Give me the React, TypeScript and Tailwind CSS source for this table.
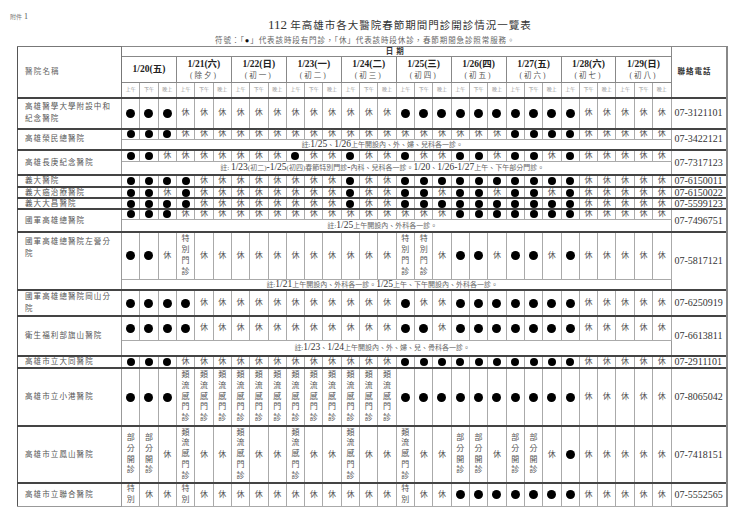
import type { ReactNode } from 'react';

type Row = {
  name: string;
  phone: string;
  cells: string;
  h: string;
  note?: string;
  noteH?: string;
  nameTop?: boolean;
  tight?: boolean;
};

const dates = [
  { d: '1/20(五)', sub: '' },
  { d: '1/21(六)', sub: '(除夕)' },
  { d: '1/22(日)', sub: '(初一)' },
  { d: '1/23(一)', sub: '(初二)' },
  { d: '1/24(二)', sub: '(初三)' },
  { d: '1/25(三)', sub: '(初四)' },
  { d: '1/26(四)', sub: '(初五)' },
  { d: '1/27(五)', sub: '(初六)' },
  { d: '1/28(六)', sub: '(初七)' },
  { d: '1/29(日)', sub: '(初八)' },
];

const rows: Row[] = [
  {
    name: '高雄醫學大學附設中和紀念醫院',
    phone: '07-3121101',
    cells: 'ooo' + 'x'.repeat(12) + 'ooooooooo' + 'oxx' + 'xxx',
    h: 'h-[31px]',
  },
  {
    name: '高雄榮民總醫院',
    phone: '07-3422121',
    cells: 'ooo' + 'x'.repeat(18) + 'oooo' + 'xxxxx',
    h: 'h-[11px]',
    note: '註:1/25、1/26上午開設內、外、婦、兒科各一診。',
    noteH: 'h-[10px]',
    tight: true,
  },
  {
    name: '高雄長庚紀念醫院',
    phone: '07-7317123',
    cells: 'oox' + 'xxx' + 'xxx' + 'oxx' + 'oxx' + 'oxx' + 'oox' + 'oox' + 'oxx' + 'xxx',
    h: 'h-[11px]',
    note: '註: 1/23(初二)-1/25(初四)春節特別門診-內科、兒科各一診。1/20、1/26-1/27上午、下午部分門診。',
    noteH: 'h-[14px]',
    tight: true,
  },
  {
    name: '義大醫院',
    phone: '07-6150011',
    cells: 'oooo' + 'x'.repeat(8) + 'oxx' + 'o'.repeat(10) + 'xxxxx',
    h: 'h-[12px]',
    tight: true,
  },
  {
    name: '義大癌治療醫院',
    phone: '07-6150022',
    cells: 'ooxo' + 'x'.repeat(8) + 'oxx' + 'oox' + 'oox' + 'oox' + 'o' + 'xxxxx',
    h: 'h-[11px]',
    tight: true,
  },
  {
    name: '義大大昌醫院',
    phone: '07-5599123',
    cells: 'oooo' + 'x'.repeat(8) + 'oxx' + 'o'.repeat(10) + 'xxxxx',
    h: 'h-[11px]',
    tight: true,
  },
  {
    name: '國軍高雄總醫院',
    phone: '07-7496751',
    cells: 'ooo' + 'x'.repeat(15) + 'o'.repeat(7) + 'xxxxx',
    h: 'h-[10px]',
    note: '註:1/25上午開設內、外科各一診。',
    noteH: 'h-[13px]',
    tight: true,
  },
  {
    name: '國軍高雄總醫院左營分院',
    phone: '07-5817121',
    cells: 'oox' + 't' + 'x'.repeat(11) + 'ttx' + 'oox' + 'oox' + 'o' + 'xxxxx',
    h: 'h-[47px]',
    note: '註:1/21上午開設內、外科各一診。1/25上午、下午開設內、外科各一診。',
    noteH: 'h-[11px]',
    nameTop: true,
  },
  {
    name: '國軍高雄總醫院岡山分院',
    phone: '07-6250919',
    cells: 'oooo' + 'x'.repeat(11) + 'oxx' + 'o'.repeat(7) + 'xxxxx',
    h: 'h-[25px]',
  },
  {
    name: '衛生福利部旗山醫院',
    phone: '07-6613811',
    cells: 'oooo' + 'x'.repeat(11) + 'oox' + 'o'.repeat(7) + 'xxxxx',
    h: 'h-[24px]',
    note: '註:1/23、1/24上午開設內、外、婦、兒、骨科各一診。',
    noteH: 'h-[16px]',
  },
  {
    name: '高雄市立大同醫院',
    phone: '07-2911101',
    cells: 'ooo' + 'x'.repeat(12) + 'o'.repeat(10) + 'xxxxx',
    h: 'h-[12px]',
    tight: true,
  },
  {
    name: '高雄市立小港醫院',
    phone: '07-8065042',
    cells: 'ooo' + 'f'.repeat(12) + 'o'.repeat(10) + 'xxxxx',
    h: 'h-[58px]',
  },
  {
    name: '高雄市立鳳山醫院',
    phone: '07-7418151',
    cells: 'ppx' + 'fxx'.repeat(5) + 'ppx' + 'ppx' + 'o' + 'xxxxx',
    h: 'h-[57px]',
  },
  {
    name: '高雄市立聯合醫院',
    phone: '07-5552565',
    cells: 'sxx' + 's' + 'x'.repeat(11) + 'sxx' + 'o'.repeat(7) + 'xxxxx',
    h: 'h-[23px]',
  },
];

const stacks: Record<string, string> = {
  t: '特別門診',
  f: '類流感門診',
  p: '部分開診',
  s: '特別',
};

function Stack({ text }: { text: string }) {
  return (
    <div className="flex flex-col items-center text-[8px] leading-[10.8px] text-[#555]">
      {text.split('').map((c, i) => (
        <span key={i}>{c}</span>
      ))}
    </div>
  );
}

function CellContent({ code, tight }: { code: string; tight?: boolean }) {
  if (code === 'o')
    return (
      <span
        className={`mx-auto block rounded-full bg-black ${tight ? 'h-[8px] w-[8px]' : 'h-[9px] w-[9px]'}`}
      />
    );
  if (code === 'x') return <span className="text-[8px] leading-none text-[#555]">休</span>;
  return <Stack text={stacks[code]} />;
}

// digits in Times size, the rest smaller and lighter
function Note({ text }: { text: string }) {
  const parts = text.split(/([0-9/\-]+)/);
  const out: ReactNode[] = parts.map((p, i) =>
    i % 2 === 1 ? (
      <span key={i} className="text-[9.5px] text-[#333]">
        {p}
      </span>
    ) : (
      <span key={i} className="text-[7px] text-[#666]">
        {p}
      </span>
    ),
  );
  return <>{out}</>;
}

const td = 'p-0 text-center align-middle border border-[#aaa] text-[8px] leading-none';
const topDark = 'border-t-2 border-t-[#444]';

export default function App() {
  return (
    <div className="h-[522px] w-[750px] overflow-hidden bg-white font-['Liberation_Serif','Noto_Sans_CJK_TC',serif] text-[#333]">
      {/* page head */}
      <div className="h-[18px] pl-[10px] pt-[9px] leading-[9px]">
        <span className="text-[6px] text-[#777]">附件</span>
        <span className="text-[8px] text-[#555]"> 1</span>
      </div>
      <div className="h-[14px] pl-[268px] text-[10.5px] leading-[14px] tracking-[1px] text-[#333]">
        <span className="text-[13px] tracking-normal">112 </span>年高雄市各大醫院春節期間門診開診情況一覽表
      </div>
      <div className="h-[14px] pl-[215px] pt-[4px] text-[7.5px] leading-[9px] tracking-[0.9px] text-[#666]">
        符號：「<span className="text-[#111]">●</span>」代表該時段有門診，「休」代表該時段休診，春節期間急診照常服務。
      </div>

      <table className="ml-[17px] w-[711px] table-fixed border-collapse text-[8px] leading-none">
        <colgroup>
          <col className="w-[104px]" />
          {Array.from({ length: 30 }).map((_, i) => (
            <col key={i} />
          ))}
          <col className="w-[56px]" />
        </colgroup>
        <thead>
          <tr className="h-[10px]">
            <td
              rowSpan={3}
              className="border border-[#777] border-l-[#555] p-0 pl-[7px] text-left align-middle text-[7.5px] leading-none tracking-[1.2px] text-[#666]"
            >
              醫院名稱
            </td>
            <td colSpan={30} className="border border-[#888] p-0 text-center text-[7.5px] font-bold leading-none tracking-[3px] text-[#333]">
              日期
            </td>
            <td
              rowSpan={3}
              className="border border-[#888] border-r-2 border-r-[#888] p-0 pl-[6px] text-left align-middle text-[7.5px] font-bold leading-none tracking-[1px] text-[#333]"
            >
              聯絡電話
            </td>
          </tr>
          <tr className="h-[26px]">
            {dates.map((d) => (
              <td key={d.d} colSpan={3} className="border border-[#888] p-0 text-center align-middle text-[8px] leading-[11px]">
                <div className="text-[9.5px] font-bold text-[#222]">{d.d}</div>
                {d.sub && <div className="text-[7.5px] tracking-[2px] text-[#555]">{d.sub}</div>}
              </td>
            ))}
          </tr>
          <tr className="h-[15px]">
            {dates.map((d) =>
              ['上午', '下午', '晚上'].map((s) => (
                <td key={d.d + s} className="border border-[#aaa] p-0 text-center align-middle text-[5px] leading-none text-[#999]">
                  {s}
                </td>
              )),
            )}
          </tr>
        </thead>
        <tbody>
          {rows.map((r) => {
            const span = r.note ? 2 : 1;
            const twoLines = r.name.length > 10;
            return [
              <tr key={r.name} className={r.h}>
                <td
                  rowSpan={span}
                  className={`border border-[#999] border-l-[#555] ${topDark} py-0 pl-[7px] pr-[6px] text-left text-[7.5px] tracking-[1.1px] text-[#555] ${
                    twoLines ? 'leading-[12px]' : 'leading-[8px]'
                  } ${r.nameTop ? 'align-top pt-[3px]' : 'align-middle'}`}
                >
                  {r.name}
                </td>
                {r.cells.split('').map((c, i) => (
                  <td key={i} className={`${td} ${topDark}`}>
                    <CellContent code={c} tight={r.tight} />
                  </td>
                ))}
                <td
                  rowSpan={span}
                  className={`border border-[#999] ${topDark} border-r-2 border-r-[#888] py-0 pl-[3px] text-left align-middle text-[10px] leading-[8px] text-[#333]`}
                >
                  {r.phone}
                </td>
              </tr>,
              r.note ? (
                <tr key={r.name + '-note'} className={r.noteH}>
                  <td colSpan={30} className="border border-[#aaa] border-t-[#555] p-0 pr-[28px] text-center align-middle text-[8px] leading-[8px]">
                    <Note text={r.note} />
                  </td>
                </tr>
              ) : null,
            ];
          })}
        </tbody>
      </table>
    </div>
  );
}
